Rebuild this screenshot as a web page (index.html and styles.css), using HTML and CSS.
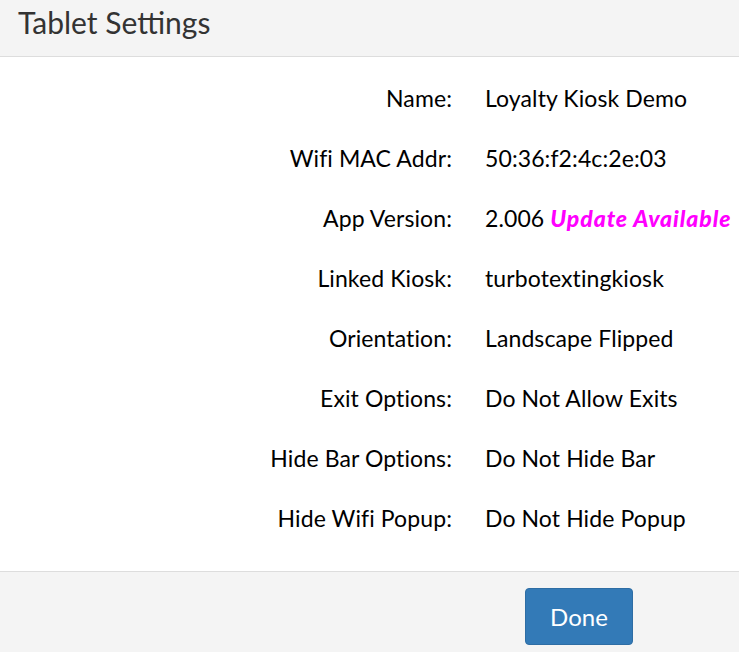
FILE: index.html
```html
<!DOCTYPE html>
<html>
<head>
<meta charset="utf-8">
<link rel="stylesheet" href="styles.css">
</head>
<body>
<div class="modal">
  <div class="modal-header">
    <h4 class="title">Tablet Settings</h4>
  </div>
  <div class="modal-body">
    <div class="row"><div class="label">Name:</div><div class="value">Loyalty Kiosk Demo</div></div>
    <div class="row"><div class="label">Wifi MAC Addr:</div><div class="value">50:36:f2:4c:2e:03</div></div>
    <div class="row"><div class="label">App Version:</div><div class="value">2.006 <span class="update">Update Available</span></div></div>
    <div class="row"><div class="label">Linked Kiosk:</div><div class="value">turbotextingkiosk</div></div>
    <div class="row"><div class="label">Orientation:</div><div class="value">Landscape Flipped</div></div>
    <div class="row"><div class="label">Exit Options:</div><div class="value">Do Not Allow Exits</div></div>
    <div class="row"><div class="label">Hide Bar Options:</div><div class="value">Do Not Hide Bar</div></div>
    <div class="row"><div class="label">Hide Wifi Popup:</div><div class="value">Do Not Hide Popup</div></div>
  </div>
  <div class="modal-footer">
    <button class="btn-done">Done</button>
  </div>
</div>
</body>
</html>
```
FILE: styles.css
```css
html, body {
  margin: 0;
  padding: 0;
  background: #fff;
}
body {
  font-family: Lato, "Open Sans", sans-serif;
  color: #000;
  width: 739px;
  height: 652px;
  overflow: hidden;
}
.modal {
  display: flex;
  flex-direction: column;
  height: 652px;
}
.modal-header {
  background: #f4f4f4;
  border-bottom: 1px solid #dddddd;
  height: 57px;
  box-sizing: border-box;
  padding: 0 18px;
  display: flex;
  align-items: center;
}
.title {
  margin: 0;
  font-size: 30px;
  font-weight: 400;
  color: #333;
  line-height: 1;
  position: relative;
  top: -6px;
}
.modal-body {
  padding: 11px 0 23px;
  display: flex;
  flex-direction: column;
}
.row {
  display: grid;
  grid-template-columns: 452px 1fr;
  column-gap: 33px;
  height: 60px;
  align-items: center;
  font-size: 23px;
  letter-spacing: 0.1px;
  white-space: nowrap;
}
.label {
  text-align: right;
}
.update {
  color: #ff00ff;
  font-weight: 900;
  font-style: italic;
  letter-spacing: 0.9px;
}
.modal-footer {
  flex: 1;
  background: #f4f4f4;
  border-top: 1px solid #dddddd;
  padding: 16px 0 0 525px;
}
.btn-done {
  width: 108px;
  height: 57px;
  background: #337ab7;
  border: 1px solid #2e6da4;
  border-radius: 4px;
  color: #fff;
  font-family: Lato, sans-serif;
  font-size: 24px;
  padding: 0;
}
```
